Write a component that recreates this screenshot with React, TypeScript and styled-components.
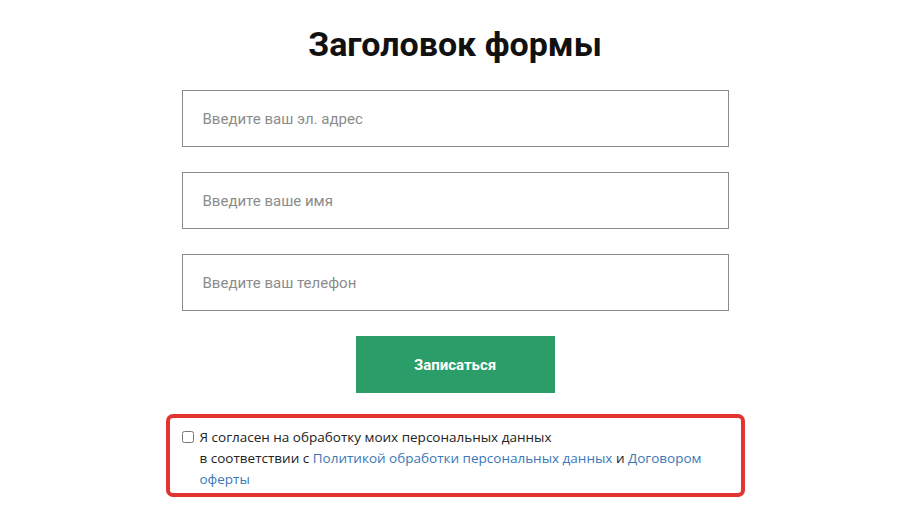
import styled, { createGlobalStyle } from "styled-components";

const GlobalStyle = createGlobalStyle`
  body {
    margin: 0;
    background: #fff;
  }
`;

const Page = styled.div`
  display: flex;
  flex-direction: column;
  align-items: center;
  padding-top: 23px;
`;

const Title = styled.h1`
  margin: 0 0 24px;
  font-family: Roboto, "Liberation Sans", sans-serif;
  font-weight: 700;
  font-size: 34px;
  line-height: 43px;
  color: #111;
`;

const Form = styled.form`
  width: 547px;
  display: flex;
  flex-direction: column;
  align-items: center;
`;

const Field = styled.input`
  box-sizing: border-box;
  width: 100%;
  height: 57px;
  margin-bottom: 25px;
  padding: 0 20px;
  border: 1px solid #8a8a8a;
  outline: none;
  font-family: Roboto, "Liberation Sans", sans-serif;
  font-size: 15px;
  color: #333;
  &::placeholder {
    color: #8c8c8c;
  }
`;

const Submit = styled.button`
  width: 199px;
  height: 57px;
  border: none;
  background: #2b9d68;
  color: #fff;
  font-family: Roboto, "Liberation Sans", sans-serif;
  font-weight: 700;
  font-size: 15px;
  cursor: pointer;
`;

const Consent = styled.label`
  box-sizing: border-box;
  width: 579px;
  margin-top: 21px;
  padding: 9px 14px 3px 12px;
  border: 4px solid #e3342f;
  border-radius: 7px;
  display: flex;
  align-items: flex-start;
  gap: 6px;
  font-family: "Open Sans", "Liberation Sans", sans-serif;
  font-size: 13.5px;
  line-height: 21px;
  color: #222;
`;

const Box = styled.input`
  margin: 4px 0 0;
  width: 12px;
  height: 12px;
  flex: none;
`;

const Link = styled.a`
  color: #3a78b8;
  text-decoration: none;
`;

export default function App() {
  return (
    <Page>
      <GlobalStyle />
      <Title>Заголовок формы</Title>
      <Form onSubmit={(e) => e.preventDefault()}>
        <Field type="email" placeholder="Введите ваш эл. адрес" />
        <Field type="text" placeholder="Введите ваше имя" />
        <Field type="tel" placeholder="Введите ваш телефон" />
        <Submit type="submit">Записаться</Submit>
      </Form>
      <Consent>
        <Box type="checkbox" />
        <span>
          Я согласен на обработку моих персональных данных
          <br />
          в соответствии с <Link href="#">Политикой обработки персональных данных</Link> и{" "}
          <Link href="#">Договором оферты</Link>
        </span>
      </Consent>
    </Page>
  );
}
